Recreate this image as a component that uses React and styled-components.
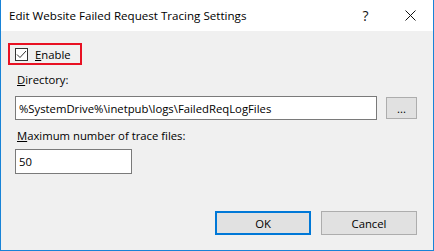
import styled, { createGlobalStyle } from "styled-components";

const GlobalStyle = createGlobalStyle`
  html, body {
    margin: 0;
    padding: 0;
    background: #ffffff;
  }
  * {
    box-sizing: border-box;
  }
`;

const Window = styled.div`
  width: 434px;
  height: 251px;
  display: flex;
  flex-direction: column;
  border: 1px solid #1883d7;
  border-top: none;
  font-family: "Open Sans", "Noto Sans", sans-serif;
  font-size: 11.3px;
  color: #000;
`;

const TitleBar = styled.div`
  height: 31px;
  flex-shrink: 0;
  display: flex;
  align-items: center;
  background: #ffffff;
  padding-left: 8px;
`;

const Title = styled.div`
  flex: 1;
  color: #000;
  white-space: nowrap;
  font-size: 11.6px;
`;

const TitleButton = styled.div`
  width: 45px;
  height: 31px;
  display: flex;
  align-items: center;
  justify-content: center;
  color: #111;
  font-size: 14px;
`;

const Body = styled.div`
  flex: 1;
  display: flex;
  flex-direction: column;
  background: #f0f0f0;
  padding: 12px 16px 15px 14px;
`;

const Highlight = styled.label`
  display: flex;
  align-items: center;
  gap: 7px;
  width: 74px;
  height: 22px;
  margin-left: -7px;
  padding-left: 5px;
  border: 2px solid #e81123;
`;

const CheckBox = styled.span`
  width: 13px;
  height: 13px;
  border: 1px solid #333;
  background: #fff;
  display: flex;
  align-items: center;
  justify-content: center;
`;

const Label = styled.div`
  padding-left: 2px;
  line-height: 16px;
  margin-top: ${(p) => p.$top}px;
  margin-bottom: ${(p) => p.$bottom}px;
`;

const Key = styled.span`
  text-decoration: underline;
`;

const Row = styled.div`
  display: flex;
  align-items: center;
  gap: 9px;
`;

const TextBox = styled.div`
  width: ${(p) => p.$width}px;
  height: ${(p) => p.$height}px;
  border: 1px solid #7a7a7a;
  background: #fff;
  display: flex;
  align-items: center;
  padding-left: 3px;
  white-space: nowrap;
  overflow: hidden;
`;

const Button = styled.button`
  width: ${(p) => p.$width}px;
  height: ${(p) => p.$height}px;
  padding: 0;
  font: inherit;
  color: #000;
  background: #e1e1e1;
  border: ${(p) => (p.$primary ? "2px solid #0078d7" : "1px solid #adadad")};
`;

const Footer = styled.div`
  margin-top: auto;
  display: flex;
  justify-content: flex-end;
  gap: 10px;
`;

const Check = () => (
  <svg width="11" height="11" viewBox="0 0 11 11">
    <path d="M1 5.5 L4 8.5 L10 2" fill="none" stroke="#333" strokeWidth="1" />
  </svg>
);

const Close = () => (
  <svg width="11" height="11" viewBox="0 0 11 11">
    <path d="M0.5 0.5 L10.5 10.5 M10.5 0.5 L0.5 10.5" stroke="#111" strokeWidth="1" />
  </svg>
);

export default function App() {
  return (
    <>
      <GlobalStyle />
      <Window>
        <TitleBar>
          <Title>Edit Website Failed Request Tracing Settings</Title>
          <TitleButton>?</TitleButton>
          <TitleButton>
            <Close />
          </TitleButton>
        </TitleBar>
        <Body>
          <Highlight>
            <CheckBox>
              <Check />
            </CheckBox>
            <span>
              <Key>E</Key>nable
            </span>
          </Highlight>
          <Label $top={7} $bottom={8}>
            <Key>D</Key>irectory:
          </Label>
          <Row>
            <TextBox $width={363} $height={24}>
              %SystemDrive%\inetpub\logs\FailedReqLogFiles
            </TextBox>
            <Button $width={31} $height={22}>...</Button>
          </Row>
          <Label $top={8} $bottom={5}>
            <Key>M</Key>aximum number of trace files:
          </Label>
          <TextBox $width={117} $height={25}>
            50
          </TextBox>
          <Footer>
            <Button $primary $width={96} $height={24}>OK</Button>
            <Button $width={96} $height={24}>Cancel</Button>
          </Footer>
        </Body>
      </Window>
    </>
  );
}
